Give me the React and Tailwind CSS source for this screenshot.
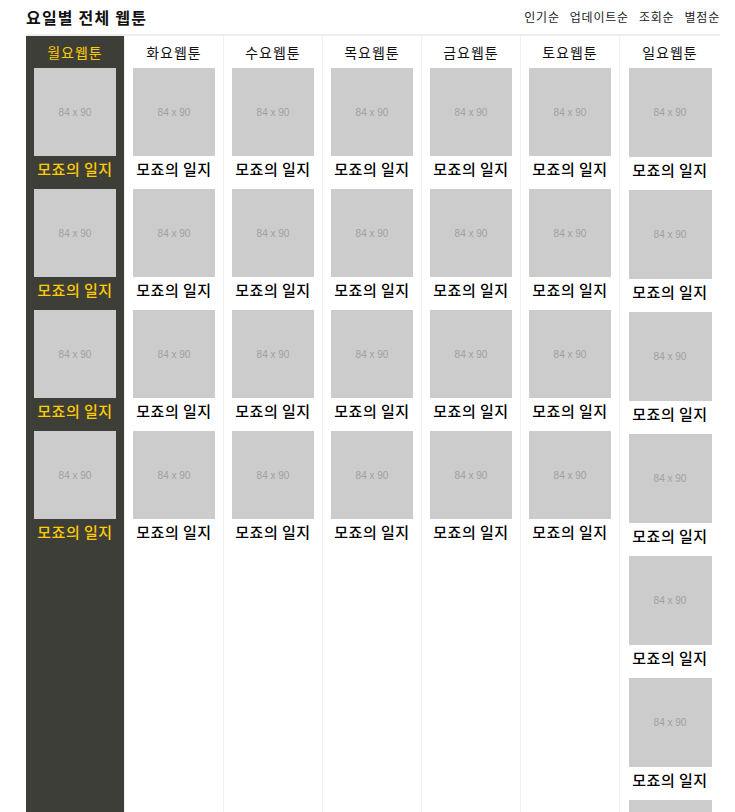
import React from 'react'

const days = [
  { name: '월요웹툰', count: 4, active: true },
  { name: '화요웹툰', count: 4 },
  { name: '수요웹툰', count: 4 },
  { name: '목요웹툰', count: 4 },
  { name: '금요웹툰', count: 4 },
  { name: '토요웹툰', count: 4 },
  { name: '일요웹툰', count: 8, wide: true },
]

const sorts = ['인기순', '업데이트순', '조회순', '별점순']

const fontKr = { fontFamily: '"Noto Sans CJK KR", "Noto Sans", sans-serif' }

const Thumb = ({ wide }) => (
  <div className={`mx-auto bg-[#cccccc] flex items-center justify-center ${wide ? 'w-[83px] h-[89px]' : 'w-[82px] h-[88px]'}`}>
    <span className="text-[10px] text-[#a0a0a0] font-['Liberation_Sans',Arial,sans-serif]">84 x 90</span>
  </div>
)

const DayColumn = ({ day, last }) => {
  const items = Array.from({ length: day.count })
  return (
    <div className={`${day.active ? 'bg-[#3e3e38]' : 'bg-white'} ${last ? '' : 'border-r border-[#f0f0f0]'}`}>
      <h3 className={`h-8 leading-8 text-center text-[14px] tracking-[1px] ${day.active ? 'text-[#ffcc00]' : 'text-[#111]'}`}>
        {day.name}
      </h3>
      <ul>
        {items.map((_, idx) => (
          <li key={idx}>
            <Thumb wide={day.wide} />
            <p className={`h-[33px] pt-[3px] leading-[20px] text-center text-[15px] tracking-[0.5px] font-medium ${day.active ? 'text-[#ffcc00]' : 'text-black'}`}>
              모죠의 일지
            </p>
          </li>
        ))}
      </ul>
    </div>
  )
}

export default function App() {
  return (
    <div className="min-h-screen bg-white" style={fontKr}>
      <div className="ml-[26px] w-[694px]">
        <div className="h-[34px] flex items-center justify-between border-b-2 border-[#eeeeee] box-content">
          <h2 className="text-[16px] font-bold tracking-[1.2px] text-[#111]">요일별 전체 웹툰</h2>
          <div className="flex gap-[10px] text-[12px] tracking-[0.8px] text-[#222]">
            {sorts.map((s) => (
              <a key={s} href="#" className="hover:underline">{s}</a>
            ))}
          </div>
        </div>
        <div className="grid grid-cols-[repeat(6,99px)_100px]">
          {days.map((day, idx) => (
            <DayColumn key={day.name} day={day} last={idx === days.length - 1} />
          ))}
        </div>
      </div>
    </div>
  )
}
